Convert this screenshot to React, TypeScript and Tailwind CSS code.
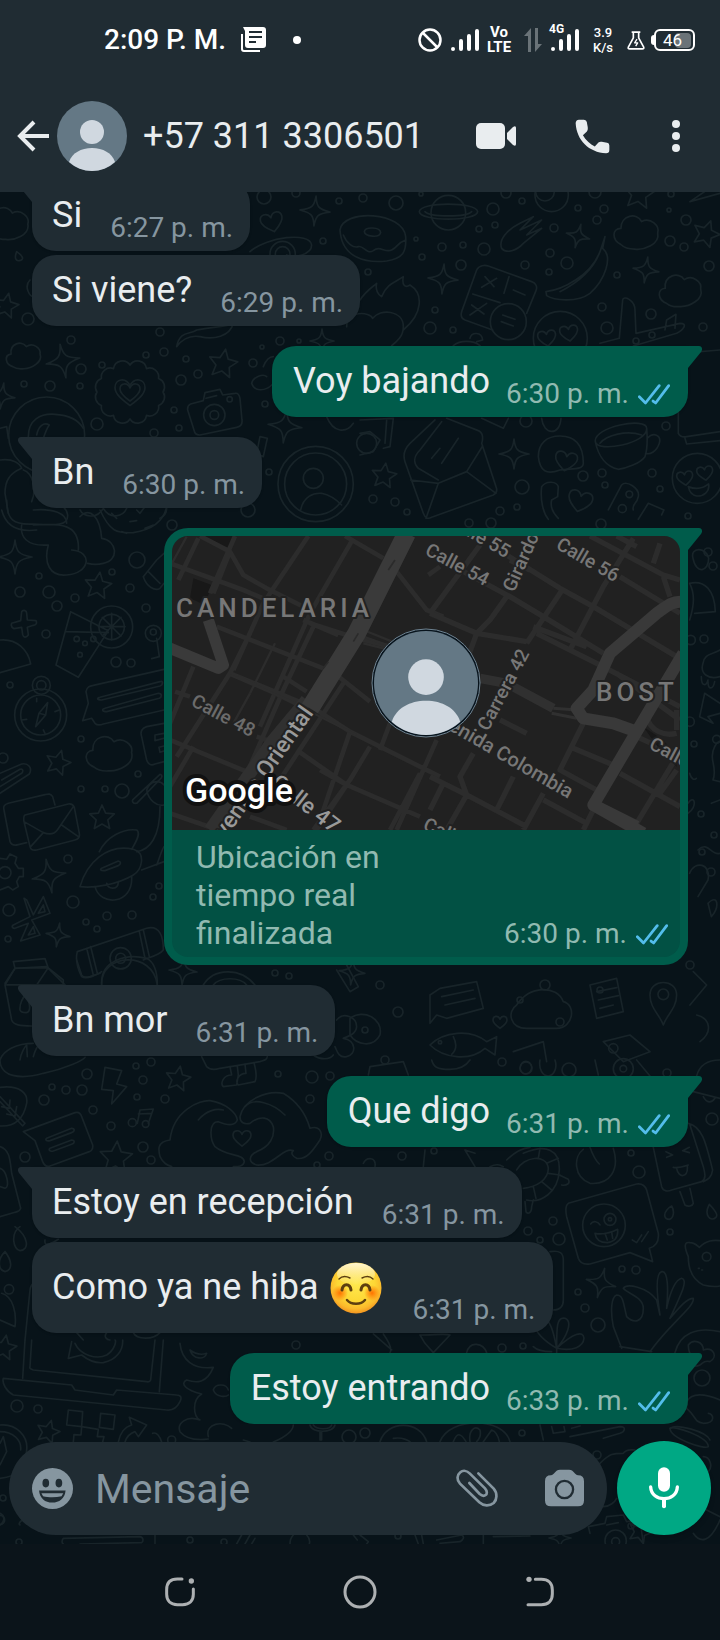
import React from 'react';

type Circle = [number, number, number];
type Mark = [number, number, number, number];

interface Message {
  id: number;
  text: string;
  time: string;
  sent?: boolean;
  tail?: boolean;
  emoji?: boolean;
  location?: boolean;
}

const messages: Message[] = [
  { id: 1, text: 'Si', time: '6:27 p. m.', tail: true },
  { id: 2, text: 'Si viene?', time: '6:29 p. m.' },
  { id: 3, text: 'Voy bajando', time: '6:30 p. m.', sent: true, tail: true },
  { id: 4, text: 'Bn', time: '6:30 p. m.', tail: true },
  { id: 5, text: 'Ubicación en tiempo real finalizada', time: '6:30 p. m.', sent: true, tail: true, location: true },
  { id: 6, text: 'Bn mor', time: '6:31 p. m.', tail: true },
  { id: 7, text: 'Que digo', time: '6:31 p. m.', sent: true, tail: true },
  { id: 8, text: 'Estoy en recepción', time: '6:31 p. m.', tail: true },
  { id: 9, text: 'Como ya ne hiba', time: '6:31 p. m.', emoji: true },
  { id: 10, text: 'Estoy entrando', time: '6:33 p. m.', sent: true, tail: true },
];

/* ---------- Wallpaper ---------- */

const bubbles: Circle[] = [
  [264, 197, 7], [296, 193, 4], [339, 201, 3], [323, 241, 3], [28, 319, 6], [160, 332, 4], [71, 340, 4],
  [146, 355, 3], [164, 352, 4], [186, 359, 3], [102, 365, 3], [81, 369, 5], [198, 374, 4], [181, 380, 5],
  [253, 363, 4], [80, 386, 3], [50, 386, 5], [24, 384, 3], [174, 410, 3], [97, 424, 6], [154, 433, 4],
  [179, 428, 3], [265, 404, 3], [280, 341, 4], [262, 347, 2], [299, 341, 2], [269, 472, 3], [248, 510, 7],
  [363, 198, 4], [396, 203, 7], [421, 194, 2], [506, 193, 5], [522, 201, 3], [493, 209, 6], [495, 225, 3],
  [479, 229, 3], [416, 239, 2], [442, 247, 4], [463, 245, 3], [484, 249, 6], [422, 257, 3], [461, 265, 5],
  [525, 265, 4], [368, 272, 3], [554, 228, 4], [578, 208, 3], [604, 209, 4], [595, 192, 6], [597, 220, 4],
  [550, 253, 4], [567, 263, 6], [549, 272, 3], [617, 275, 3], [669, 210, 2], [671, 194, 3], [686, 220, 5],
  [670, 241, 5], [684, 247, 4], [709, 266, 5], [435, 310, 3], [430, 328, 6], [453, 330, 3], [602, 307, 4],
  [607, 328, 6], [651, 314, 5], [652, 335, 3], [703, 327, 4], [636, 341, 3], [666, 426, 4], [526, 421, 6],
  [583, 476, 5], [602, 473, 4], [605, 485, 3], [652, 473, 4], [660, 489, 3], [522, 487, 7], [373, 499, 4],
  [395, 502, 4], [407, 512, 3], [500, 511, 4], [517, 507, 3], [688, 516, 3], [469, 523, 4], [491, 523, 5],
  [601, 524, 5], [708, 552, 4], [713, 566, 4], [704, 639, 4], [694, 744, 3], [701, 814, 3], [714, 835, 3],
  [702, 852, 3], [711, 872, 4], [172, 525, 5], [137, 560, 8], [39, 576, 3], [112, 572, 3], [20, 592, 5],
  [49, 592, 6], [57, 606, 5], [75, 598, 4], [130, 588, 4], [146, 608, 4], [46, 634, 4], [116, 662, 5],
  [131, 663, 4], [10, 685, 3], [81, 739, 3], [3, 758, 5], [138, 774, 3], [81, 789, 3], [105, 789, 3],
  [122, 791, 7], [68, 859, 4], [73, 902, 6], [9, 910, 6], [86, 922, 3], [107, 916, 4], [97, 929, 3],
  [132, 915, 4], [153, 897, 3], [159, 886, 3], [8, 939, 3], [275, 973, 3], [289, 976, 3], [87, 1074, 5],
  [52, 1087, 3], [44, 1100, 5], [66, 1090, 4], [82, 1090, 5], [93, 1110, 4], [111, 1126, 4], [136, 1066, 3],
  [151, 1062, 4], [143, 1080, 4], [137, 1097, 3], [165, 1099, 4], [143, 1147, 5], [151, 1160, 4],
  [25, 1157, 5], [278, 1074, 3], [312, 1077, 6], [330, 1076, 4], [310, 1099, 4], [329, 1156, 4],
  [317, 1165, 3], [502, 1062, 4], [667, 1073, 4], [402, 1156, 4], [434, 1151, 3], [631, 1153, 3],
  [639, 1172, 6], [712, 1119, 6], [553, 1221, 4], [559, 1239, 6], [528, 1231, 4], [540, 1240, 3],
  [670, 1232, 3], [622, 1269, 3], [636, 1270, 4], [578, 1292, 3], [585, 1308, 4], [598, 1325, 7],
  [523, 1346, 3], [502, 1348, 4], [702, 1378, 8], [296, 1345, 4], [17, 1406, 6], [38, 1409, 4],
  [3, 1498, 3], [349, 1437, 7], [19, 1542, 3], [190, 1540, 3], [224, 1542, 3], [365, 1433, 5],
  [522, 1433, 3], [597, 1455, 4], [631, 1526, 3], [398, 1536, 3], [380, 985, 4], [398, 1012, 5],
  [365, 1030, 3], [520, 1000, 3], [545, 985, 5], [560, 1022, 4], [600, 990, 3], [385, 1060, 4],
  [690, 965, 4], [526, 1068, 6], [569, 1070, 7],
];

const stars: Mark[] = [
  [223, 364, 15, 10], [6, 306, 13, 12], [639, 194, 16, 8], [706, 234, 14, 20], [384, 476, 13, 8], [98, 586, 14, 8],
  [58, 763, 13, 16], [102, 818, 13, 0], [178, 1079, 13, 10], [116, 1158, 17, 4], [48, 1432, 12, 16],
  [4, 1348, 13, 10], [640, 1532, 12, 20],
];

const sparkles: Mark[] = [
  [315, 211, 15, 4], [322, 341, 12, 0], [63, 361, 17, -10], [2, 396, 13, 8], [285, 426, 17, 6], [443, 279, 15, 4],
  [578, 236, 12, 14], [646, 270, 13, 8], [514, 454, 15, 0], [15, 557, 17, 0], [49, 876, 17, -10], [58, 935, 12, 8],
  [183, 971, 14, 4], [601, 1283, 15, 14], [560, 1538, 11, 0], [352, 972, 13, 6],
];

const hearts: Mark[] = [
  [272, 222, 11, -14], [130, 392, 15, 0], [130, 392, 10, 0], [547, 338, 9, -8], [569, 333, 9, -8], [580, 501, 12, 14],
  [566, 461, 11, 10], [685, 478, 8, -8], [705, 473, 8, -8], [242, 1138, 9, 0], [500, 1022, 7, 0],
];

const clouds: Mark[] = [
  [637, 233, 23, 0], [681, 291, 22, -6], [24, 356, 18, -8], [110, 754, 24, -4], [8, 224, 22, 0],
];

// Larger drawings, grouped by the corner that their coordinates start from.
const drawings: { x: number; y: number; d: string; circles: Circle[] }[] = [
  {
    x: 0,
    y: 180,
    d: 'M50 215C42 235 48 244 58 242C72 240 72 230 50 215ZM572 672L610 662L615 638L660 628L668 645L705 640C715 638 718 645 720 655L726 720C728 735 720 740 710 742L600 765C588 766 584 760 582 750L563 690C562 680 565 675 572 672ZM618 655L650 647M85 770C85 720 120 700 165 703C205 705 235 720 250 745M110 765C115 740 130 725 148 735C140 745 135 760 130 775M902 990C910 950 940 938 965 940C990 945 1010 960 1025 975M750 215C800 170 930 155 935 195C935 225 880 235 860 225M0 745L20 740L25 775M0 840C40 835 60 850 65 865C30 880 15 900 15 940L25 1000M70 870C100 880 110 930 95 965M530 500C540 450 570 465 590 450C640 440 690 440 700 430C690 470 640 480 600 470C570 465 545 480 530 500ZM755 610C760 590 790 580 800 590M755 610C765 640 800 630 815 615M790 560C800 535 812 530 820 530M980 710C1000 760 1040 760 1060 730M780 770L770 820L790 830L802 775ZM240 990C250 1010 290 1020 310 985C330 1020 370 1010 380 985M410 990L420 1000L450 960M500 985C500 1000 490 1010 480 1015M100 990C160 985 200 1000 200 1030M90 300C70 320 90 350 100 350',
    circles: [[643, 705, 32], [643, 705, 13], [689, 658, 8], [140, 765, 114], [947, 912, 113], [947, 912, 93], [940, 895, 30], [848, 222, 38], [848, 222, 22]],
  },
  {
    x: 360,
    y: 180,
    d: 'M178 95C180 65 350 65 353 95C350 125 180 125 178 95ZM195 95C210 112 320 112 335 95M-60 150C-50 85 130 95 137 170C140 215 130 235 80 243C20 250 -55 235 -60 150ZM-50 165C-40 190 -20 205 -5 200C10 195 20 225 40 212C60 195 75 220 95 210C115 200 110 190 137 180M13 155C15 140 60 140 62 158C58 175 15 170 13 155ZM425 205C415 180 440 150 480 130L520 110L480 150L545 120L500 165L545 145L490 190C470 212 440 222 425 205ZM558 335C600 330 700 290 725 200L735 170L728 205C760 230 735 300 690 340C650 370 580 360 560 347ZM600 335C650 310 700 270 720 215M398 450L315 420C303 415 302 405 305 395L350 270C357 255 375 255 385 258L515 305C530 310 532 322 528 332L500 400M375 290L402 320M410 295L365 322M335 375L372 402M380 370L330 405M460 330L495 345M428 405L465 418M424 425L460 438M338 342L420 368M447 290L432 340M720 490L778 475L788 360C790 345 825 360 825 390L828 460L960 430C985 430 970 450 950 460L820 498M915 450L920 420L948 403L945 445M0 360C20 330 40 320 50 310C45 330 55 345 65 350C80 310 110 305 130 290C125 315 135 325 150 315C190 340 190 400 130 450M-40 440C-40 390 30 395 38 415C60 385 130 390 130 440C130 470 110 485 95 497M960 520L1080 510M955 640V760C960 770 970 772 980 770L1080 755M975 775L980 792L1080 782M225 720L150 790C130 810 130 830 135 845L190 1000C195 1015 205 1018 215 1012L400 945C410 940 412 930 408 920L365 790C372 770 365 755 355 752L260 715M152 900L235 910L320 875L408 940M235 910L198 1015M320 875L368 798M235 900L175 865C160 850 160 830 180 810L245 725M215 835L240 805M245 850L295 775M535 830C535 790 560 768 600 768C650 768 670 800 670 850C670 870 640 865 600 870C560 885 540 875 535 830ZM706 785C700 740 860 710 860 745C865 790 710 820 706 785C715 830 740 860 775 868C800 865 840 850 855 830C865 800 862 770 860 745M720 790C740 765 800 750 845 765M862 775C880 755 905 765 898 790C890 815 870 825 857 820M985 920C1010 930 1030 925 1046 912C1050 935 1030 950 1010 948C995 945 988 935 985 920ZM595 1015C580 1000 570 980 575 960L593 950L595 920C590 905 560 900 545 920C540 960 550 1000 565 1018M745 990L785 915C800 900 840 925 835 950C830 975 815 970 820 990M835 1018L865 970L912 990L905 1005M0 720L100 715L90 800L70 805M0 760L30 755L60 780L40 815L0 825M545 715C550 765 600 770 603 715M365 715L430 745L445 715M80 720L75 790M990 65L1070 10M990 65L1080 40M330 475C335 455 365 455 368 480L350 485M280 497C300 480 340 480 360 497',
    circles: [[265, 98, 52], [445, 425, 54], [601, 475, 81], [1012, 895, 75], [575, 45, 50], [555, 35, 28], [808, 943, 10], [787, 986, 12], [20, 790, 30]],
  },
  {
    x: 0,
    y: 500,
    d: 'M5 30C20 90 70 95 110 90M20 0C20 60 40 75 100 72C160 75 205 80 203 45C200 20 180 15 160 10M65 75C60 110 80 140 145 135M100 75C180 70 240 70 235 150M145 135C130 190 150 230 200 225C270 220 280 155 215 150M240 50C270 20 300 50 305 115C350 120 360 180 310 190C290 195 275 193 263 190M300 30C330 95 350 100 400 98C450 90 490 70 500 20M335 40L350 55M390 65L410 62M435 85L460 75M365 95L380 100M35 370L62 362L65 335C72 328 80 332 80 340L82 360L108 362C112 370 108 375 100 376L82 382L85 405C78 415 70 412 68 404L65 382L42 386C34 382 33 375 35 370ZM0 420C50 415 85 450 92 492L0 518M212 335L168 495L235 532L325 392ZM198 395L325 398M335 340V420M295 380H375M307 352L363 408M363 352L307 408M110 595V605M65 660L80 658M135 700L130 690M165 635L178 630M107 680L117 640L143 608L137 645ZM117 640L137 645M258 575C260 560 270 558 280 556L492 508M258 575L265 610L248 662L275 655L285 670C290 675 300 676 310 672L492 630M300 592L480 545C490 540 490 555 480 558L305 600C290 600 290 594 300 592ZM315 625L475 580C488 580 485 592 478 595L320 635C305 635 305 627 315 625ZM492 670L440 680C425 685 420 695 425 710L440 780C445 795 455 797 465 792L492 785M492 700L465 705V722L492 715M492 738L477 742L480 757L492 753M0 820L65 792C85 788 98 805 88 822L0 880M5 840L60 808C70 805 70 815 65 820L0 860M398 900L480 823C490 825 485 835 480 838L410 910C400 912 396 906 398 900ZM440 870C450 840 480 840 492 855M440 870C445 900 470 920 492 915M480 920C480 1010 450 1050 410 1055M165 915L158 890C152 880 145 882 135 884L25 910C10 915 10 920 12 930L30 1025C35 1037 45 1037 55 1034L80 1028M75 945L205 912C215 910 220 915 223 922L238 1000C240 1012 235 1018 225 1020L110 1050C98 1052 92 1050 90 1040L72 965C70 952 70 948 75 945ZM72 965L130 998C150 1005 165 1000 172 990L220 920M130 998L92 1040M185 975L235 1010M0 1075L20 1078L30 1062L50 1072L45 1090L55 1105H70V1130H58L50 1145L55 1160L38 1170L25 1160L0 1170M240 1160C260 1090 320 1030 400 1048C440 1060 425 1110 400 1125C350 1155 280 1165 240 1160ZM305 1105L355 1083C365 1085 362 1093 355 1097L315 1112C300 1113 300 1108 305 1105ZM298 1055C320 1010 370 985 410 990C425 1000 405 1030 395 1048M425 1110L492 1085M470 1095C480 1070 485 1050 492 1040M320 1150C325 1170 355 1170 355 1145M285 1160C300 1220 400 1215 395 1130M80 1200L72 1195L90 1250L40 1275C32 1280 40 1286 45 1285L85 1270L62 1323L120 1305L95 1260L150 1240L130 1190L100 1245ZM115 1240L130 1215L135 1235ZM85 1305L100 1280L105 1300ZM232 1355L440 1285C480 1275 490 1310 490 1350C480 1365 440 1375 430 1380M232 1355C225 1380 235 1410 245 1430C260 1440 290 1425 305 1415M260 1345L280 1425M272 1340L292 1420M418 1295L435 1375M430 1290L448 1370M305 1455C300 1360 460 1350 472 1455M40 1385L45 1405L15 1450M40 1385L135 1376L145 1405L195 1455M45 1405L145 1403L110 1455M20 1455H195M430 230L470 180L492 160M430 230C440 260 465 275 480 265L492 250M445 215L480 250M470 415L478 470L455 476',
    circles: [[335, 381, 63], [335, 381, 38], [230, 417, 8], [255, 430, 7], [280, 417, 8], [240, 464, 7], [122, 645, 78], [122, 645, 60], [124, 556, 27], [124, 556, 14], [460, 400, 24], [460, 396, 9], [15, 1118, 18], [362, 1375, 32], [362, 1375, 15]],
  },
  {
    x: 0,
    y: 960,
    d: 'M15 75L45 25L140 20L190 60V75M15 75L35 180C40 195 60 198 95 198M60 150C58 130 70 110 78 105C90 130 95 155 78 158C68 158 62 155 60 150ZM0 300C10 270 50 250 100 250M0 300C0 350 60 360 130 340C200 325 250 300 255 292M60 300C62 280 75 260 80 255L82 290M100 290C105 270 115 255 120 250M230 0L245 45C250 55 260 52 270 50L300 40M315 322L365 332L350 372L380 380L335 432L340 392L305 388ZM412 490L420 450L460 447L445 490M415 462L455 460M0 382C60 375 85 400 80 430C70 480 40 500 0 498M0 410L75 490L68 498L0 425M30 420L28 445L5 440M50 440L45 468L20 462M70 515L225 458C235 455 242 460 245 470L278 555C280 568 275 572 268 575L150 618C140 622 132 615 128 605L105 542ZM140 535L215 505C225 505 225 515 215 518L150 542C138 545 135 538 140 535ZM150 565L215 540C225 540 225 550 215 553L160 573C148 576 145 568 150 565ZM0 560C30 570 30 600 35 640L62 745C60 752 55 755 45 757L0 770M0 625C20 630 30 680 15 685L0 680M510 540C520 450 600 420 630 422C680 430 710 460 712 480C705 500 680 495 655 485C625 485 630 540 645 560C680 590 730 580 733 605C730 620 715 620 700 620M595 480C620 450 650 445 670 450M510 540C470 545 475 570 480 590C490 610 500 615 515 620M720 470C730 420 800 390 850 400C900 430 920 470 930 505C960 495 970 520 960 540C940 570 920 600 890 595C880 590 870 580 880 572M880 572C850 560 820 620 770 615C740 605 750 585 770 575C810 560 825 530 820 500C810 470 780 465 750 490C730 495 720 485 720 470M735 440C760 410 820 430 855 465M605 290L620 320C630 330 645 330 660 325L780 305C795 300 800 300 802 290M690 320L695 345C670 345 660 370 670 380L710 375L715 345L712 318M735 312L738 340C715 340 705 365 715 375L765 365C770 355 768 330 762 308M1010 180C1030 155 1070 170 1070 200C1068 225 1040 230 1030 235C1070 240 1070 285 1040 290C1015 295 1010 270 1005 260M940 285C960 300 990 300 1000 285M610 75C640 25 720 20 765 75M640 75C660 50 720 50 740 75M1010 30L1050 95L1075 80L1040 15M305 75C300 0 380 -20 440 -5C470 10 472 50 472 75M60 800C30 820 40 870 60 872C90 870 85 830 45 800M15 875C-10 900 -5 930 15 935C40 930 35 900 15 875M5 1000C40 1010 50 1060 45 1100L0 1080M75 1140L90 990C92 975 98 970 105 968M135 840C130 870 170 840 175 838M230 1118L250 1140M320 1118C310 1130 320 1140 330 1140M400 1118C410 1140 460 1140 480 1118',
    circles: [[397, 488, 12], [437, 492, 10], [27, 988, 14]],
  },
  {
    x: 360,
    y: 1060,
    d: 'M25 45L30 20L130 5L145 45M215 0C220 20 230 28 270 28C300 28 320 15 330 0M480 25C485 -5 510 0 515 20C515 45 485 50 480 25ZM540 0C535 30 550 48 565 48C585 45 592 20 585 0M705 0L715 45M830 0L870 48M1010 48C1020 10 1050 0 1080 0M1000 95L1080 115M1030 110C1040 130 1055 130 1065 115M985 190C1030 200 1040 260 1058 330C1055 355 1040 360 1030 365M880 262L905 380C910 395 925 395 935 390L1025 365C1040 355 1035 340 1030 320L990 195M960 395L975 435C985 442 998 438 1000 430L990 385M918 275L938 285L920 292M988 262L968 272L988 278M940 322C955 325 970 320 985 315M950 325C955 355 985 355 982 318M670 268C640 290 640 350 690 370C750 375 780 330 760 265M690 262C700 290 705 300 718 312M625 430L830 372C845 370 855 375 860 390L895 520C898 550 885 560 868 565L878 605L810 578L690 612C670 615 660 610 655 595L620 470C615 445 618 435 625 430ZM692 492C700 480 715 485 720 495M705 520C730 525 750 520 773 508C775 530 765 545 742 548C720 548 708 540 705 520ZM735 520L742 540M755 516L758 535M817 540L830 548L845 525M845 545L865 515M490 280C560 250 600 270 598 330C595 400 540 430 500 420M470 330C490 290 560 280 565 325C565 360 530 380 490 385M540 265L535 295M595 295L560 310M600 345L565 340M575 390L545 365M528 415L520 380M440 300C460 280 480 265 510 262M598 345L625 358C632 370 620 378 605 375M495 425L498 455C505 465 515 458 515 440L520 420M915 470C910 455 930 440 935 438C945 455 940 475 928 478C920 478 916 475 915 470ZM1045 470C1035 455 1045 440 1048 433C1065 450 1075 465 1068 472C1060 480 1050 478 1045 470ZM985 590C970 555 975 545 990 548C1005 548 1015 560 1018 562M1018 562C1040 540 1060 540 1080 542M985 590C985 630 1000 660 1030 675C1050 680 1070 680 1080 678M1015 625H1018M1025 630H1028M785 865L760 800C750 750 755 710 770 705C790 705 790 730 800 770C820 790 850 790 850 745C850 710 800 700 790 685C800 670 860 680 890 720L900 765M900 765C890 700 885 640 905 635C925 630 925 690 920 745M920 745C930 700 945 660 965 655C985 660 965 700 930 775M930 775C960 740 980 715 1000 715C1005 740 930 790 870 875M780 860L875 875M590 865C500 810 520 770 550 775C570 780 580 810 590 865C590 800 590 770 615 775C640 785 620 830 590 865C640 820 670 810 672 835C670 860 640 875 590 865M575 875C550 875 530 870 520 860M590 865L590 878M985 855C1000 835 1030 845 1030 870C1060 860 1075 890 1050 905C1030 900 1030 910 1020 915C1000 925 985 910 1000 895C985 880 985 865 985 855ZM945 878C960 820 1010 800 1080 815M980 1045C975 1000 1020 995 1080 1020M980 1045C1010 1070 1000 1085 1030 1090C1070 1090 1060 1060 1045 1060M930 1105C950 1090 1040 1115 1050 1140M570 575C600 570 610 580 610 600V720C610 740 600 750 580 750M180 825C220 825 260 820 270 825L220 878L195 850ZM40 822L95 870M70 822C90 850 95 870 90 878M320 878C330 840 370 850 380 878M190 320L195 270M345 320L315 270L345 280M10 310C20 290 50 290 45 320M390 320C410 310 420 315 430 320M540 1095L550 1140M575 1100L580 1120L615 1115L612 1100M635 1105L660 1098M630 1130L780 1100C800 1100 795 1115 780 1120L730 1135',
    circles: [[790, 26, 30], [790, 26, 10], [732, 496, 64], [750, 478, 18], [750, 478, 5], [1040, 590, 13]],
  },
  {
    x: 0,
    y: 1340,
    d: 'M75 0L68 115M490 0L478 155M90 80L95 0M465 0L452 120C450 126 445 126 440 125L100 90C92 88 88 85 90 80M10 115L215 135L225 150L340 165L350 150L530 165C545 165 545 175 540 185C530 205 515 212 500 210L40 165C20 155 5 130 10 115ZM205 55L215 5M205 55L245 45C270 65 290 70 310 68C350 60 370 30 368 0M225 10C240 45 290 60 320 45C345 30 350 0 345 0M540 10C545 60 580 90 640 82C620 130 590 130 560 120C540 130 555 150 605 162C575 180 580 230 600 240C560 225 530 250 540 275C560 300 600 300 625 297M570 30C590 45 605 45 620 40C615 60 580 60 570 30ZM695 265C670 240 615 250 625 290M640 150C645 130 680 130 685 150M640 150C650 175 680 170 685 165M205 210L248 215L245 260L200 255ZM302 220L345 225L340 268L298 262ZM245 260L295 268L292 290L312 290L308 306M245 260L243 285L222 284L220 306M355 306C360 280 375 260 395 255L388 232L440 255L415 290L405 275C390 280 380 290 375 306M458 280C470 275 480 290 485 306M0 255C50 250 85 290 80 330C75 380 60 410 0 415M0 275C40 275 65 300 62 330M0 310L10 290L20 335L0 375M730 300L750 306M820 306C860 290 880 270 880 255M930 255C935 280 1000 280 1005 255M940 255C950 270 990 270 995 255M960 275V300H965V275M190 595L420 590C432 592 430 605 425 608L240 612M190 595C185 600 185 610 190 612M465 585V612M710 612L725 585M735 612L750 585M755 612L765 595M870 612C870 600 875 590 880 585M920 585C930 595 930 605 928 612M1060 585L1072 600M60 555C50 550 75 530 80 545M0 520C20 530 10 550 0 555',
    circles: [[515, 300, 12], [0, 540, 14]],
  },
  {
    x: 360,
    y: 1400,
    d: 'M60 125C80 60 180 60 200 125M100 115C130 110 150 125 150 125M240 125C270 50 430 50 450 125M280 125C290 100 300 95 318 125M330 125C325 90 345 75 360 90C365 110 355 120 350 125M370 125L395 90C410 95 415 110 418 125M930 85C940 75 1045 110 1045 140C1035 150 930 115 930 85ZM720 190C750 160 760 160 790 160C800 145 815 150 825 150M690 400L685 380L735 370L740 350L790 345L800 365L840 360L850 430M740 375L775 368M1000 400C1020 430 1050 430 1080 360M1040 330L1080 350M730 320C750 320 765 305 770 295M1030 170C1050 170 1060 200 1045 215M230 420L305 405C315 410 310 420 300 425L240 430M400 410L510 408M370 405V432M165 405L175 432M185 405L190 432M0 405L25 425L20 432',
    circles: [[767, 422, 32], [767, 425, 12]],
  },
  {
    x: 330,
    y: 965,
    d: 'M300 90L330 70L440 50L460 130L350 160L320 150L300 175ZM335 95L430 75M345 120L435 100M300 240C340 200 420 190 470 230L500 215L495 270L465 250C420 290 340 280 300 240ZM370 215C380 235 380 255 365 268M560 120C600 60 680 60 700 110C740 120 730 190 680 190H590C540 190 530 140 560 120ZM780 60L860 40L880 140L800 160ZM800 80L860 68M805 105L865 92M810 130L850 120M960 90C960 40 1040 40 1040 90C1040 130 1010 150 1000 180C990 150 960 130 960 90ZM820 230L900 210L960 260L880 290ZM550 260L640 230L650 290M60 160C100 130 160 160 150 210C130 250 80 240 60 210ZM1090 20L1130 60L1080 120M1100 150C1140 160 1150 200 1110 230',
    circles: [[1000, 88, 16], [330, 232, 5], [850, 250, 14]],
  },
  {
    x: 688,
    y: 540,
    d: 'M15 55C5 20 55 20 62 55C62 95 25 105 15 55ZM5 130C50 120 80 150 82 215L20 220M5 130C20 160 20 190 5 240M45 370C50 340 70 345 96 330M45 370C35 400 60 420 96 410M40 410C40 440 55 440 60 420M60 425C60 450 75 450 80 425M50 460L96 490M50 460L35 530L75 550L60 530L96 520M80 620C90 600 96 605 96 605M80 620C60 660 90 680 75 720L96 725M0 790C20 760 30 800 0 820M70 790L96 780M5 700C10 720 20 720 25 715M30 930C60 900 70 950 96 940M5 1000C20 960 70 970 60 1020L30 1070M60 1090C90 1060 96 1100 70 1130Z',
    circles: [[86, 598, 12], [8, 300, 14], [5, 545, 14]],
  },
];

const starPath =
  'M0 -1L.28 -.38L.95 -.31L.45 .15L.59 .81L0 .47L-.59 .81L-.45 .15L-.95 -.31L-.28 -.38Z';
const sparklePath =
  'M0 -1C.08 -.3 .2 -.15 1 0C.2 .15 .08 .3 0 1C-.08 .3 -.2 .15 -1 0C-.2 -.15 -.08 -.3 0 -1Z';
const heartPath =
  'M0 .9C-.4 .6 -1 .2 -1 -.3C-1 -.9 -.25 -1 0 -.4C.25 -1 1 -.9 1 -.3C1 .2 .4 .6 0 .9Z';
const cloudPath =
  'M-.7 .5C-1.1 .3 -1.1 -.2 -.7 -.2C-.7 -.8 0 -.9 .2 -.5C.6 -.7 1 -.3 .9 0C1 .5 .3 .75 -.1 .7C-.4 .7 -.6 .6 -.7 .5Z';

function Marks({ items, d }: { items: Mark[]; d: string }) {
  return (
    <>
      {items.map(([x, y, r, turn], i) => (
        <path
          key={i}
          d={d}
          vectorEffect="non-scaling-stroke"
          transform={`translate(${x} ${y}) rotate(${turn}) scale(${r})`}
        />
      ))}
    </>
  );
}

function Wallpaper() {
  const petals = Array.from({ length: 12 }, (_, i) => {
    const a = (i / 12) * Math.PI * 2;
    return `${130 + Math.cos(a) * 33} ${392 + Math.sin(a) * 27}`;
  });

  return (
    <svg
      aria-hidden="true"
      className="absolute inset-0 w-full h-full pointer-events-none"
      viewBox="0 192 720 1352"
      preserveAspectRatio="xMidYMid slice"
      fill="none"
      stroke="#182429"
      strokeWidth="1.7"
      strokeLinecap="round"
      strokeLinejoin="round"
    >
      {bubbles.map(([x, y, r], i) => (
        <circle key={i} cx={x} cy={y} r={r} />
      ))}
      <Marks items={stars} d={starPath} />
      <Marks items={sparkles} d={sparklePath} />
      <Marks items={hearts} d={heartPath} />
      <Marks items={clouds} d={cloudPath} />
      <path d={`M${petals[11]}` + petals.map((p) => `A9 9 0 0 1 ${p}`).join('')} />
      {drawings.map((group, i) => (
        <g key={i} transform={`translate(${group.x} ${group.y}) scale(.3333)`} strokeWidth="5">
          <path d={group.d} />
          {group.circles.map(([x, y, r], j) => (
            <circle key={j} cx={x} cy={y} r={r} />
          ))}
        </g>
      ))}
    </svg>
  );
}

/* ---------- Small drawings ---------- */

function PersonShape() {
  return (
    <>
      <circle cx="35" cy="35" r="35" fill="#647885" />
      <circle cx="35" cy="31" r="12" fill="#d0d8e0" />
      <path d="M12 61C15 52 24 47 35 47S55 52 58 61A34 34 0 0 1 12 61Z" fill="#d0d8e0" />
    </>
  );
}

function Ticks() {
  return (
    <svg aria-label="Leído" viewBox="834 604 98 64" className="w-8 h-[21px] shrink-0" fill="none" stroke="#53bdeb" strokeWidth="8.5" strokeLinecap="round" strokeLinejoin="round">
      <path d="M838 643L857 662L899 609" />
      <path d="M880 656L888 662L928 609" />
    </svg>
  );
}

function SmilingFace() {
  return (
    <svg role="img" aria-label="Cara sonriente" viewBox="0 0 52 52" className="w-[52px] h-[52px] mx-[11px] shrink-0">
      <defs>
        <radialGradient id="face" cx="50%" cy="40%" r="60%">
          <stop offset="0" stopColor="#ffe94f" />
          <stop offset="0.6" stopColor="#fdd835" />
          <stop offset="0.85" stopColor="#fbb92b" />
          <stop offset="1" stopColor="#f29420" />
        </radialGradient>
        <linearGradient id="shine" x1="0" y1="0" x2="0" y2="1">
          <stop offset="0" stopColor="#fff6d0" />
          <stop offset="1" stopColor="#fff6d0" stopOpacity="0" />
        </linearGradient>
        <radialGradient id="blush">
          <stop offset="0" stopColor="#ff7200" />
          <stop offset="1" stopColor="#ff7200" stopOpacity="0" />
        </radialGradient>
      </defs>
      <circle cx="26" cy="26" r="25.5" fill="url(#face)" />
      <ellipse cx="26" cy="12" rx="19" ry="11" fill="url(#shine)" />
      <circle cx="10" cy="31" r="8" fill="url(#blush)" />
      <circle cx="42" cy="31" r="8" fill="url(#blush)" />
      <g fill="none" stroke="#5d3f10" strokeLinecap="round">
        <path d="M9 17C12 14 16 14 20 16M32 16C36 14 40 14 43 17" strokeWidth="1.4" />
        <path d="M12 28C13 21 20 21 21 28M31 28C32 21 39 21 40 28" strokeWidth="3" />
        <path d="M17 38C21 43 31 43 35 38" strokeWidth="2.5" />
      </g>
    </svg>
  );
}

function Tail({ sent }: { sent?: boolean }) {
  return sent ? (
    <svg aria-hidden="true" viewBox="0 0 14 22" className="absolute top-0 -right-3.5 w-3.5 h-[22px]" fill="#005c4b">
      <path d="M0 0H11C14 0 15 3 13 6L0 22Z" />
    </svg>
  ) : (
    <svg aria-hidden="true" viewBox="0 0 14 22" className="absolute top-0 -left-3.5 w-3.5 h-[22px]" fill="#202c33">
      <path d="M14 0H3C0 0 -1 3 1 6L14 22Z" />
    </svg>
  );
}

function SignalBars() {
  return (
    <svg aria-hidden="true" viewBox="0 0 28 22" className="w-7 h-[22px]" stroke="#fff" strokeWidth="4" strokeLinecap="round">
      <path d="M2 20V20M10 12V20M18 7V20M26 2V20" />
    </svg>
  );
}

/* ---------- Map ---------- */

function MapPicture() {
  return (
    <svg
      role="img"
      aria-label="Mapa"
      viewBox="0 0 508 294"
      preserveAspectRatio="xMidYMid slice"
      className="block w-full h-[294px] bg-[#212121] font-['Roboto',sans-serif]"
    >
      <g fill="none" strokeLinejoin="round">
        <g transform="translate(-22 -26) scale(.3333)">
          <path d="M130 205L185 225L165 285L120 265ZM150 78H250L235 115Z" fill="#181818" />
          <g stroke="#2c2c2c" strokeWidth="14">
            <path d="M150 78L240 125L280 195L350 235L480 300M255 78L180 250M240 125L190 250M60 160L280 240L350 270M145 85L85 210M475 78L340 280L250 480M610 85L480 310L330 650M585 78L700 145M740 185L830 300L880 320M200 350L520 475M460 330L565 375M480 340L620 385L720 410M490 350L400 540L260 860M300 370L240 490M240 490L460 580M560 495L660 575M75 545L120 560M60 690L290 785L200 960M80 740L240 490M130 710L60 830M320 680L350 690M500 600L600 665L870 800M580 520L350 870M600 665L500 960M510 780L590 825L810 920M440 720L590 825L500 960M660 710L600 810L490 960M720 640L690 720M810 790L720 960M860 690L740 960M60 910L190 955M130 470L60 640M400 500L470 545M300 920L410 960M870 170L835 195" />
          </g>
          <g stroke="#2c2c2c" strokeWidth="7">
            <path d="M110 80L60 170M640 360L740 400M640 380L740 415M640 400L740 425M240 495L460 590M265 500L470 600M490 610L620 675M300 550L250 640M375 400L300 550" />
          </g>
          <path d="M60 415L205 475L220 465L175 330" stroke="#3a3a3a" strokeWidth="34" />
          <path d="M470 570L370 690L180 960" stroke="#303030" strokeWidth="38" />
          <path d="M770 70L620 370L480 595" stroke="#3a3a3a" strokeWidth="56" />
          <path d="M715 180L735 150M625 370L610 395M520 475L535 455" stroke="#2b2b2b" strokeWidth="5" />
        </g>
        <g transform="translate(258 -26) scale(.3333)">
          <g stroke="#2c2c2c" strokeWidth="16">
            <path d="M0 310L140 370L290 395M0 130L240 260L340 320L520 430M190 110L390 235L490 290L740 440M240 150L300 180M480 78L700 195L750 210M560 78L620 110M690 100L670 160M700 200L720 260M570 200L750 310M610 85L520 230L420 420M400 235L290 400M230 260L180 330L140 370L100 480M320 370L500 460L750 590M150 105L0 310M310 350L470 410M560 490L750 630M210 630L290 670M130 730L90 800L110 855L50 960M250 800L200 900M0 800L110 855L290 950M40 820L0 900M460 640L390 780L500 840M430 715L550 765M570 790L750 890M620 680L750 740M740 740L620 940M740 780L690 850M340 850L280 960M340 870L470 940M650 620C660 660 700 680 740 670M740 600V660M500 880L460 960" />
          </g>
          <path d="M640 650L700 690L740 740V770L690 720Z" fill="#181818" />
          <g stroke="#303030" strokeWidth="28">
            <path d="M150 505L230 520L370 595" />
          </g>
          <path d="M370 595L440 600M365 610L440 625" stroke="#303030" strokeWidth="9" />
          <path d="M760 275C720 275 710 290 680 310L540 430L490 540L440 595L460 625L550 640L620 665M760 430L620 665L490 885L640 970M490 885L620 950" stroke="#393939" strokeWidth="36" />
        </g>
      </g>
      <g fill="#777" stroke="#212121" strokeWidth="4" paintOrder="stroke" strokeLinejoin="round" fontSize="19" fontWeight="500">
        <text x="4" y="81" fontSize="26" letterSpacing="4">CANDELARIA</text>
        <text x="424" y="165" fontSize="26" letterSpacing="4">BOST</text>
        <text fill="#6b6b6b" transform="translate(18 169) rotate(28)">Calle 48</text>
        <text transform="translate(252 18) rotate(28)">Calle 54</text>
        <text transform="translate(383 12) rotate(30)">Calle 56</text>
        <text transform="translate(274 -12) rotate(30)">Calle 55</text>
        <text transform="translate(342 57) rotate(-66)">Girardot</text>
        <text transform="translate(316 196) rotate(-62)">Carrera 42</text>
        <text fontSize="20" transform="translate(256 182) rotate(30)">Avenida Colombia</text>
        <text transform="translate(476 212) rotate(28)">Calle 50</text>
        <text transform="translate(250 293) rotate(24)">Calle 45</text>
        <text fill="#999" fontSize="23" textAnchor="end" transform="translate(142 177) rotate(-55)">Avenida Oriental</text>
        <text fill="#999" fontSize="22" transform="translate(98 249) rotate(38)">Calle 47</text>
      </g>
      <text x="13" y="266" fontSize="34" fontWeight="500" fill="#fff" stroke="#111" strokeWidth="8" paintOrder="stroke" strokeLinejoin="round">
        Google
      </text>
      <circle cx="254" cy="147" r="54" fill="#07131c" stroke="#708492" strokeWidth="1" />
      <g transform="translate(202 95) scale(1.486)">
        <PersonShape />
      </g>
    </svg>
  );
}

/* ---------- Messages ---------- */

function MessageTime({ time, sent }: { time: string; sent?: boolean }) {
  return (
    <span className={`flex items-center gap-[9px] shrink-0 text-[28px] leading-8 ${sent ? 'text-[#91bab1]' : 'text-[#8696a0]'}`}>
      <time>{time}</time>
      {sent && <Ticks />}
    </span>
  );
}

function LocationBubble({ message }: { message: Message }) {
  return (
    <li className="relative self-end mt-5 w-[524px] max-w-full p-2 rounded-3xl rounded-tr-none bg-[#005c4b]">
      <Tail sent />
      <div className="rounded-2xl overflow-hidden bg-[#025144]">
        <MapPicture />
        <div className="flex items-end justify-between pt-2 pl-6 pr-3">
          <p className="w-56 pb-[5px] text-[32px] leading-[38px] text-[#91bab1]">{message.text}</p>
          <div className="pb-[7px]">
            <MessageTime time={message.time} sent />
          </div>
        </div>
      </div>
    </li>
  );
}

function TextBubble({ message }: { message: Message }) {
  const side = message.sent
    ? 'self-end mt-5 gap-4 pl-[21px] pr-[18px] rounded-tr-none bg-[#005c4b]'
    : message.tail
      ? 'self-start mt-5 gap-7 pl-5 pr-[17px] rounded-tl-none bg-[#202c33]'
      : 'self-start mt-1 gap-7 pl-5 pr-[17px] bg-[#202c33]';

  return (
    <li className={`relative flex items-end max-w-full rounded-3xl shadow-sm ${side}`}>
      {message.tail && <Tail sent={message.sent} />}
      <p className={`flex items-center py-[15px] text-4xl text-[#e9edef] ${message.emoji ? '-mr-2 leading-[61px]' : 'leading-[41px]'}`}>
        {message.text}
        {message.emoji && <SmilingFace />}
      </p>
      <div className="pb-[7px]">
        <MessageTime time={message.time} sent={message.sent} />
      </div>
    </li>
  );
}

/* ---------- Bars ---------- */

function StatusBar() {
  return (
    <div className="flex items-center h-20 pl-[104px] pr-[25px] text-white">
      <span className="text-[28px] leading-8 font-medium">2:09 P. M.</span>
      <svg aria-hidden="true" viewBox="0 0 26 26" className="w-[26px] h-[26px] ml-3.5">
        <path d="M3 0H23Q26 0 26 3V18Q26 21 23 21H8Q5 21 5 18V4Z" fill="#fff" />
        <path d="M2 7V22Q2 24 4 24H20" fill="none" stroke="#fff" strokeWidth="2" />
        <path d="M9 5H22M9 10H22M9 15H16" stroke="#202c33" strokeWidth="2" />
      </svg>
      <span className="w-2 h-2 ml-[27px] rounded-full bg-white" />

      <div className="flex items-center ml-auto">
        <svg aria-hidden="true" viewBox="0 0 24 24" className="w-6 h-6" fill="none" stroke="#fff" strokeWidth="2.5">
          <circle cx="12" cy="12" r="10.5" />
          <path d="M5 5L19 19" />
        </svg>
        <div className="ml-[9px]">
          <SignalBars />
        </div>
        <span className="flex flex-col items-center w-[26px] ml-[7px] text-[15px] leading-[15px] font-bold">
          <span>Vo</span>
          <span>LTE</span>
        </span>
        <svg aria-hidden="true" viewBox="0 0 18 24" className="w-[18px] h-6 ml-3" fill="#6a7378">
          <path d="M7 0V24H4V8H0Z" />
          <path d="M11 24V0H14V16H18Z" />
        </svg>
        <span className="relative ml-[9px]">
          <span className="absolute -top-1.5 -left-0.5 text-[12px] leading-3 font-bold">4G</span>
          <SignalBars />
        </span>
        <span className="flex flex-col items-center w-5 ml-3.5 text-[13px] leading-[15px] font-medium">
          <span>3.9</span>
          <span>K/s</span>
        </span>
        <svg aria-hidden="true" viewBox="0 0 54 56" className="w-[18px] h-[19px] ml-3.5" fill="none" stroke="#fff" strokeWidth="5" strokeLinejoin="round">
          <path d="M14 3H40M19 4V20L4 48Q2 53 8 53H46Q52 53 50 48L35 20V4" />
          <path d="M30 24L23 35H32L26 45" strokeWidth="4" />
        </svg>
        <span className="w-[3px] h-2.5 ml-1.5 rounded-l bg-white" />
        <span className="relative flex items-center w-[41px] h-[22px] border-2 border-white rounded-md">
          <span className="w-4 h-[15px] ml-auto mr-0.5 rounded-sm bg-[#6a7378]" />
          <span className="absolute inset-0 pr-1 text-center text-[17px] leading-[19px]">46</span>
        </span>
      </div>
    </div>
  );
}

function ChatHeader() {
  return (
    <div className="flex items-center h-28 pl-[17px] pr-10">
      <button type="button" aria-label="Atrás" className="shrink-0">
        <svg viewBox="0 0 32 32" className="w-8 h-8" fill="none" stroke="#e9edef" strokeWidth="4">
          <path d="M32 16H4M17 2L3 16L17 30" />
        </svg>
      </button>
      <svg role="img" aria-label="Foto de perfil" viewBox="0 0 70 70" className="w-[70px] h-[70px] ml-2 shrink-0">
        <PersonShape />
      </svg>
      <h1 className="flex-1 ml-4 text-4xl leading-10 text-[#e9edef] whitespace-nowrap">+57 311 3306501</h1>
      <div className="flex items-center text-[#e9edef]">
        <button type="button" aria-label="Videollamada">
          <svg viewBox="0 0 40 26" className="w-10 h-[26px]" fill="#e9edef">
            <rect width="29" height="26" rx="5" />
            <path d="M31 10L37 4Q40 2 40 5V21Q40 24 37 22L31 16Z" />
          </svg>
        </button>
        <button type="button" aria-label="Llamar" className="ml-[59px]">
          <svg viewBox="643 358 106 106" className="w-[35px] h-[35px]" fill="#e9edef">
            <path d="M655 360H670Q678 361 679 368C680 378 685 388 679 396L667 407C675 421 689 434 703 441L714 429Q718 426 724 427L740 430Q747 431 747 438V452Q747 462 737 462C685 459 648 423 645 371Q645 361 655 360Z" />
          </svg>
        </button>
        <button type="button" aria-label="Más opciones" className="ml-[62px]">
          <svg viewBox="0 0 8 32" className="w-2 h-8" fill="#e9edef">
            <circle cx="4" cy="4" r="4" />
            <circle cx="4" cy="16" r="4" />
            <circle cx="4" cy="28" r="4" />
          </svg>
        </button>
      </div>
    </div>
  );
}

function Composer() {
  return (
    <form className="relative flex items-center gap-2.5 pt-[17px] pb-[9px] px-[9px]" onSubmit={(e) => e.preventDefault()}>
      <div className="flex flex-1 min-w-0 items-center h-[93px] px-[23px] rounded-full bg-[#202c33]">
        <button type="button" aria-label="Emojis" className="shrink-0">
          <svg viewBox="96 383 122 122" className="w-[41px] h-[41px]">
            <circle cx="157" cy="444" r="61" fill="#8696a0" />
            <g fill="#202c33">
              <ellipse cx="137" cy="428" rx="10" ry="13" />
              <ellipse cx="176" cy="428" rx="10" ry="13" />
              <path d="M117 450H196C194 474 177 486 156 486S119 474 117 450Z" />
            </g>
            <path d="M124 458H189L184 467C167 471 145 471 129 467Z" fill="#8696a0" />
          </svg>
        </button>
        <label htmlFor="message" className="sr-only">Mensaje</label>
        <input
          id="message"
          type="text"
          placeholder="Mensaje"
          className="flex-1 min-w-0 ml-[22px] pt-0.5 text-[41px] leading-[48px] bg-transparent text-[#e9edef] placeholder:text-[#8696a0] outline-none"
        />
        <button type="button" aria-label="Adjuntar" className="shrink-0">
          <svg viewBox="284 200 132 126" className="w-11 h-[42px]" fill="none" stroke="#8696a0" strokeWidth="8" strokeLinecap="round">
            <path d="M354 219L400 265C412 279 410 298 400 308C388 318 370 318 357 306L299 250C288 238 290 224 300 216C308 209 320 211 328 219L374 264C382 273 380 281 376 284C371 288 364 286 358 281L327 248" />
          </svg>
        </button>
        <button type="button" aria-label="Cámara" className="shrink-0 ml-[46px]">
          <svg viewBox="555 203 118 113" className="w-[39px] h-[38px]">
            <path d="M573 221C583 220 586 204 600 204H628C642 204 645 220 655 221Q673 221 673 239V297Q673 315 655 315H573Q555 315 555 297V239Q555 221 573 221Z" fill="#8696a0" />
            <circle cx="614" cy="264" r="26" fill="none" stroke="#202c33" strokeWidth="7" />
          </svg>
        </button>
      </div>
      <button type="button" aria-label="Mensaje de voz" className="flex items-center justify-center w-[94px] h-[94px] shrink-0 rounded-full bg-[#00a884] shadow-md">
        <svg viewBox="864 202 96 126" className="w-8 h-[42px]" fill="none" stroke="#fff" strokeLinecap="round">
          <rect x="894" y="203" width="36" height="73" rx="18" fill="#fff" stroke="none" />
          <path d="M872 262C874 309 950 309 952 262" strokeWidth="10" />
          <path d="M912 300V320" strokeWidth="12" />
        </svg>
      </button>
    </form>
  );
}

function NavigationBar() {
  return (
    <nav className="flex items-center justify-center h-24 shrink-0 bg-[#0b141a]">
      <button type="button" aria-label="Recientes" className="flex justify-center w-1/4">
        <svg viewBox="492 708 96 96" className="w-8 h-8" fill="none" stroke="#adb0b2" strokeWidth="9" strokeLinecap="round">
          <path d="M546 717H532C511 717 500 729 500 749V763C500 783 512 794 532 794H548C568 794 580 783 580 763V747" />
          <circle cx="574" cy="723" r="8" fill="#adb0b2" stroke="none" />
        </svg>
      </button>
      <button type="button" aria-label="Inicio" className="flex justify-center w-1/4">
        <svg viewBox="0 0 34 34" className="w-[34px] h-[34px]" fill="none" stroke="#adb0b2" strokeWidth="3">
          <circle cx="17" cy="17" r="15" />
        </svg>
      </button>
      <button type="button" aria-label="Volver" className="flex justify-center w-1/4">
        <svg viewBox="492 530 96 96" className="w-8 h-8" fill="none" stroke="#adb0b2" strokeWidth="9" strokeLinecap="round">
          <circle cx="507" cy="540" r="8" fill="#adb0b2" stroke="none" />
          <path d="M526 540H544C565 540 577 552 577 572V584C577 604 565 616 544 616H504" />
        </svg>
      </button>
    </nav>
  );
}

export default function App() {
  return (
    <div className="flex flex-col h-screen overflow-hidden bg-[#081319] font-['Roboto',sans-serif]">
      <header className="shrink-0 bg-[#202c33]">
        <StatusBar />
        <ChatHeader />
      </header>
      <main className="relative flex flex-col flex-1 min-h-0">
        <Wallpaper />
        {/* Reversed column keeps the newest message in view */}
        <div className="relative flex flex-col-reverse flex-1 min-h-0 overflow-y-auto [scrollbar-width:none]">
          <ul className="flex flex-col px-8">
            {messages.map((message) =>
              message.location ? (
                <LocationBubble key={message.id} message={message} />
              ) : (
                <TextBubble key={message.id} message={message} />
              ),
            )}
          </ul>
        </div>
        <Composer />
      </main>
      <NavigationBar />
    </div>
  );
}
